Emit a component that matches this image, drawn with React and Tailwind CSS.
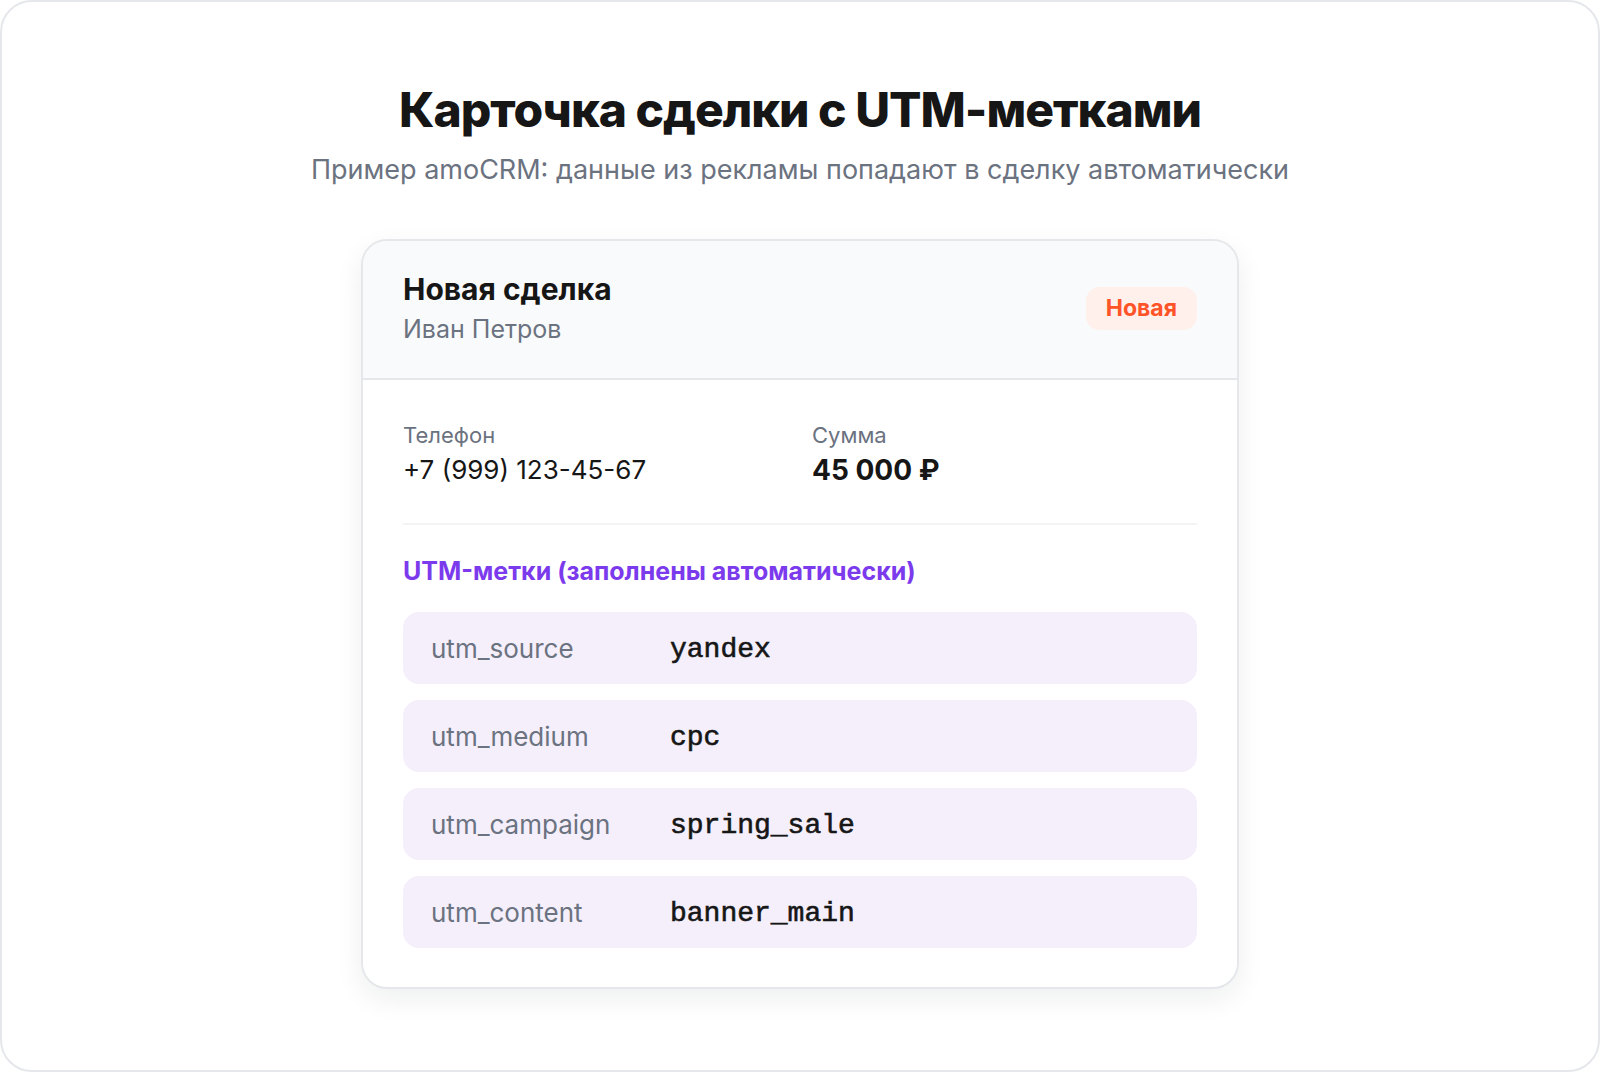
const utm = [
  { key: 'utm_source', value: 'yandex' },
  { key: 'utm_medium', value: 'cpc' },
  { key: 'utm_campaign', value: 'spring_sale' },
  { key: 'utm_content', value: 'banner_main' },
];

export default function App() {
  return (
    <div className="w-[1600px] h-[1072px] bg-white font-['Inter','Noto_Sans',sans-serif]">
      <div className="h-full border-2 border-[#e5e7eb] rounded-[32px] flex flex-col items-center">
        {/* Heading */}
        <h1 className="mt-[78px] text-[48px] leading-[60px] font-extrabold text-[#161616] tracking-[-1px]">
          Карточка сделки с UTM-метками
        </h1>
        <p className="mt-[12px] text-[27px] leading-[36px] text-[#6b7280]">
          Пример amoCRM: данные из рекламы попадают в сделку автоматически
        </p>

        {/* Deal card */}
        <div className="mt-[51px] w-[878px] border-2 border-[#e5e7eb] rounded-[26px] bg-white overflow-hidden shadow-[0_10px_28px_rgba(17,24,39,0.07)]">
          <div className="flex items-center justify-between px-10 pt-[29px] pb-[31px] bg-[#f9fafb] border-b-2 border-[#e5e7eb]">
            <div>
              <h2 className="text-[30px] leading-[38px] font-bold text-[#161616]">Новая сделка</h2>
              <p className="mt-[3px] text-[25px] leading-[36px] text-[#6b7280]">Иван Петров</p>
            </div>
            <span className="h-[43px] px-5 rounded-[14px] bg-[#fff0eb] text-[#ff5428] text-[23px] leading-[43px] font-bold">
              Новая
            </span>
          </div>

          <div className="px-10 pt-10 pb-[39px]">
            <div className="grid grid-cols-2 gap-x-6">
              <div>
                <p className="text-[22px] leading-[30px] text-[#6b7280]">Телефон</p>
                <p className="mt-[2px] text-[26px] leading-[36px] text-[#161616]">+7 (999) 123-45-67</p>
              </div>
              <div>
                <p className="text-[22px] leading-[30px] text-[#6b7280]">Сумма</p>
                <p className="mt-[2px] text-[28px] leading-[36px] font-bold text-[#161616]">45 000 ₽</p>
              </div>
            </div>

            <div className="mt-[35px] h-[2px] bg-[#f3f4f6]" />

            <h3 className="mt-[30px] text-[25px] leading-[32px] font-bold text-[#7c3aed]">
              UTM-метки (заполнены автоматически)
            </h3>

            <div className="mt-[25px] flex flex-col gap-4">
              {utm.map((row) => (
                <div key={row.key} className="h-[72px] flex items-center px-[28px] rounded-[16px] bg-[#f4effb]">
                  <span className="w-[239px] text-[26px] text-[#6b7280]">{row.key}</span>
                  <span className="mt-[3px] font-['Liberation_Mono',monospace] text-[28px] text-[#161616] [-webkit-text-stroke:0.6px_#161616]">
                    {row.value}
                  </span>
                </div>
              ))}
            </div>
          </div>
        </div>
      </div>
    </div>
  );
}
